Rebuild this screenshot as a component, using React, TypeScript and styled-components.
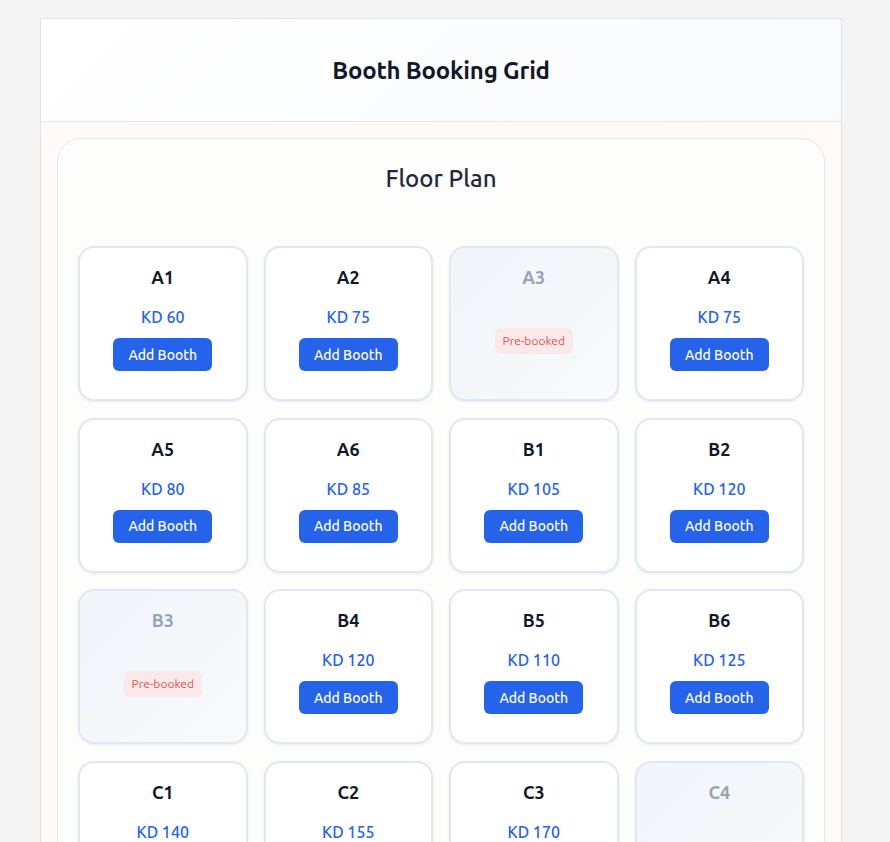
import React from "react";
import styled, { createGlobalStyle } from "styled-components";

const GlobalStyle = createGlobalStyle`
  html, body {
    margin: 0;
    padding: 0;
    background: #f4f4f5;
    font-family: "Ubuntu", "Noto Sans", "Open Sans", sans-serif;
    color: #0f172a;
  }
  * { box-sizing: border-box; }
`;

const Page = styled.div`
  padding: 18px 48px 0 40px;
`;

const Container = styled.div`
  width: 802px;
  border: 1px solid #e2e2e2;
  border-bottom: none;
  background: #fffaf7;
`;

const Header = styled.header`
  height: 103px;
  display: flex;
  align-items: center;
  justify-content: center;
  background: linear-gradient(135deg, #ffffff 0%, #f8fafc 100%);
  border-bottom: 1px solid #e2e8f0;
`;

const Title = styled.h1`
  margin: 0;
  font-size: 24px;
  font-weight: 700;
  letter-spacing: -0.2px;
  color: #111827;
`;

const Body = styled.main`
  padding: 16px 16px 0 16px;
`;

const Panel = styled.section`
  background: #fdfdfc;
  border: 1px solid #e2e8f0;
  border-radius: 24px;
  padding: 24px 20px 20px;
`;

const PanelTitle = styled.h2`
  margin: 0 0 51px;
  text-align: center;
  font-size: 24px;
  font-weight: 500;
  line-height: 32px;
  color: #1e293b;
`;

const Grid = styled.div`
  display: grid;
  grid-template-columns: repeat(4, 1fr);
  gap: 16.5px 16px;
`;

const Card = styled.div<{ $booked?: boolean }>`
  height: 155px;
  border: 2px solid #e2e8f0;
  border-radius: 16px;
  padding: 15px 12px;
  display: flex;
  flex-direction: column;
  align-items: center;
  background: ${(p) =>
    p.$booked ? "linear-gradient(135deg, #f1f5f9 0%, #f8fafc 100%)" : "#ffffff"};
  box-shadow: 0 1px 3px rgba(15, 23, 42, 0.08);
`;

const BoothName = styled.div<{ $booked?: boolean }>`
  font-size: 18px;
  line-height: 28px;
  font-weight: 700;
  color: ${(p) => (p.$booked ? "#94a3b8" : "#111827")};
  margin-bottom: 14px;
`;

const Price = styled.div`
  font-size: 16px;
  line-height: 24px;
  font-weight: 500;
  color: #2563eb;
  margin-bottom: 9px;
`;

const AddButton = styled.button`
  border: none;
  background: #2563eb;
  color: #ffffff;
  font-family: inherit;
  font-size: 14px;
  font-weight: 500;
  height: 33px;
  padding: 0 15px;
  border-radius: 6px;
  cursor: pointer;
`;

const Badge = styled.span`
  margin-top: 23px;
  background: #fbe9e9;
  color: #e05252;
  font-size: 12px;
  line-height: 18px;
  padding: 4px 8px;
  border-radius: 6px;
`;

type Booth = { id: string; price?: number; booked?: boolean };

const booths: Booth[] = [
  { id: "A1", price: 60 },
  { id: "A2", price: 75 },
  { id: "A3", booked: true },
  { id: "A4", price: 75 },
  { id: "A5", price: 80 },
  { id: "A6", price: 85 },
  { id: "B1", price: 105 },
  { id: "B2", price: 120 },
  { id: "B3", booked: true },
  { id: "B4", price: 120 },
  { id: "B5", price: 110 },
  { id: "B6", price: 125 },
  { id: "C1", price: 140 },
  { id: "C2", price: 155 },
  { id: "C3", price: 170 },
  { id: "C4", booked: true },
];

export default function App() {
  return (
    <>
      <GlobalStyle />
      <Page>
        <Container>
          <Header>
            <Title>Booth Booking Grid</Title>
          </Header>
          <Body>
            <Panel>
              <PanelTitle>Floor Plan</PanelTitle>
              <Grid>
                {booths.map((b) => (
                  <Card key={b.id} $booked={b.booked}>
                    <BoothName $booked={b.booked}>{b.id}</BoothName>
                    {b.booked ? (
                      <Badge>Pre-booked</Badge>
                    ) : (
                      <>
                        <Price>KD {b.price}</Price>
                        <AddButton>Add Booth</AddButton>
                      </>
                    )}
                  </Card>
                ))}
              </Grid>
            </Panel>
          </Body>
        </Container>
      </Page>
    </>
  );
}
